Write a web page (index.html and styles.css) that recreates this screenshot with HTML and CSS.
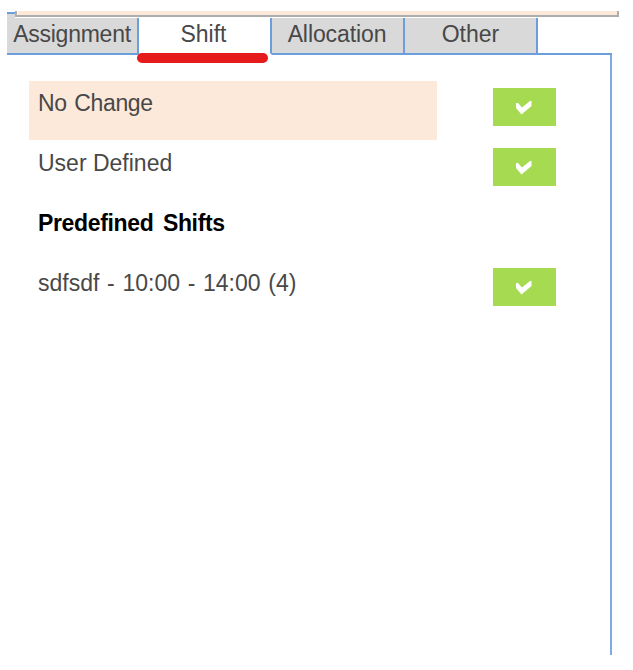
FILE: index.html
```html
<!DOCTYPE html>
<html lang="en">
<head>
<meta charset="utf-8">
<title>Shift</title>
<link rel="stylesheet" href="styles.css">
</head>
<body>
<main class="dialog">
  <div class="strip"></div>
  <nav class="tabs">
    <div class="tab tab-first"><span class="t-assign">Assignment</span></div>
    <div class="tab active"><span class="t-shift">Shift</span></div>
    <div class="tab"><span class="t-alloc">Allocation</span></div>
    <div class="tab"><span class="t-other">Other</span></div>
    <div class="rest"></div>
  </nav>
  <section class="panel">
    <div class="row"><div class="label selected"><span class="t-none">No Change</span></div><div class="button"><svg width="18" height="16" viewBox="0 0 18 16"><path d="M1 3v5l5.5 6.5L16.5 6V1H15L7 7.5 3 3Z" fill="#fff"/></svg></div></div>
    <div class="row"><div class="label"><span class="t-user">User Defined</span></div><div class="button"><svg width="18" height="16" viewBox="0 0 18 16"><path d="M1 3v5l5.5 6.5L16.5 6V1H15L7 7.5 3 3Z" fill="#fff"/></svg></div></div>
    <div class="row"><div class="label heading"><span class="t-pre">Predefined Shifts</span></div></div>
    <div class="row"><div class="label"><span class="t-time">sdfsdf - 10:00 - 14:00 (4)</span></div><div class="button"><svg width="18" height="16" viewBox="0 0 18 16"><path d="M1 3v5l5.5 6.5L16.5 6V1H15L7 7.5 3 3Z" fill="#fff"/></svg></div></div>
  </section>
</main>
</body>
</html>
```
FILE: styles.css
```css
* { box-sizing: border-box; }
body { margin: 0; background: #fff; color: #484848; font: 23px/28px "Liberation Sans", Arial, sans-serif; }
.dialog { width: 633px; height: 670px; padding: 11px 0 0 7px; overflow: hidden; }
.strip { position: relative; z-index: 1; width: 604px; height: 6px; margin-left: 8px; border: solid #adadad; border-width: 0 2px 2px; background: #fde9da; box-shadow: inset 1px 0 #fff; }
.tabs { display: flex; height: 38px; padding-top: 1px; white-space: nowrap; }
.tab { width: 133px; height: 37px; border-right: 2px solid #6b9edb; border-bottom: 2px solid #6b9edb; background: #d9d9d9; text-align: center; padding-top: 2px; }
.tab-first { position: relative; width: 132px; }
.tab-first::before { content: ""; position: absolute; left: 0; top: -6px; width: 8px; height: 6px; background: #d9d9d9; border-top: 2px solid #6b9edb; }
.active { position: relative; background: #fff; border-bottom-color: #fff; }
.active::after { content: ""; position: absolute; left: -2px; top: 35px; width: 131px; height: 10px; border-radius: 5px; background: #e61b1b; }
.rest { width: 74px; border-bottom: 2px solid #6b9edb; }
.panel { width: 605px; height: 600px; border-right: 2px solid #7fa9df; padding: 26px 0 0 22px; }
.row { display: flex; height: 60px; }
.label { width: 408px; height: 59px; padding: 8px 9px; white-space: nowrap; }
.selected { background: #fde9da; }
.heading { color: #000; font-weight: bold; }
.button { display: flex; width: 63px; height: 38px; margin: 7px 0 0 56px; align-items: center; justify-content: center; background: #a6da50; }
.button svg { margin-left: -1px; margin-top: 2px; }
.label span, .tab span { display: inline-block; }
.t-assign { letter-spacing: -.25px; }
.t-shift { margin-left: -2px; }
.t-alloc { letter-spacing: -.1px; margin-left: -1px; }
.t-none { letter-spacing: -.35px; word-spacing: 1.5px; }
.t-pre { letter-spacing: -.35px; word-spacing: 3.5px; }
.t-time { word-spacing: 1.3px; }
```
